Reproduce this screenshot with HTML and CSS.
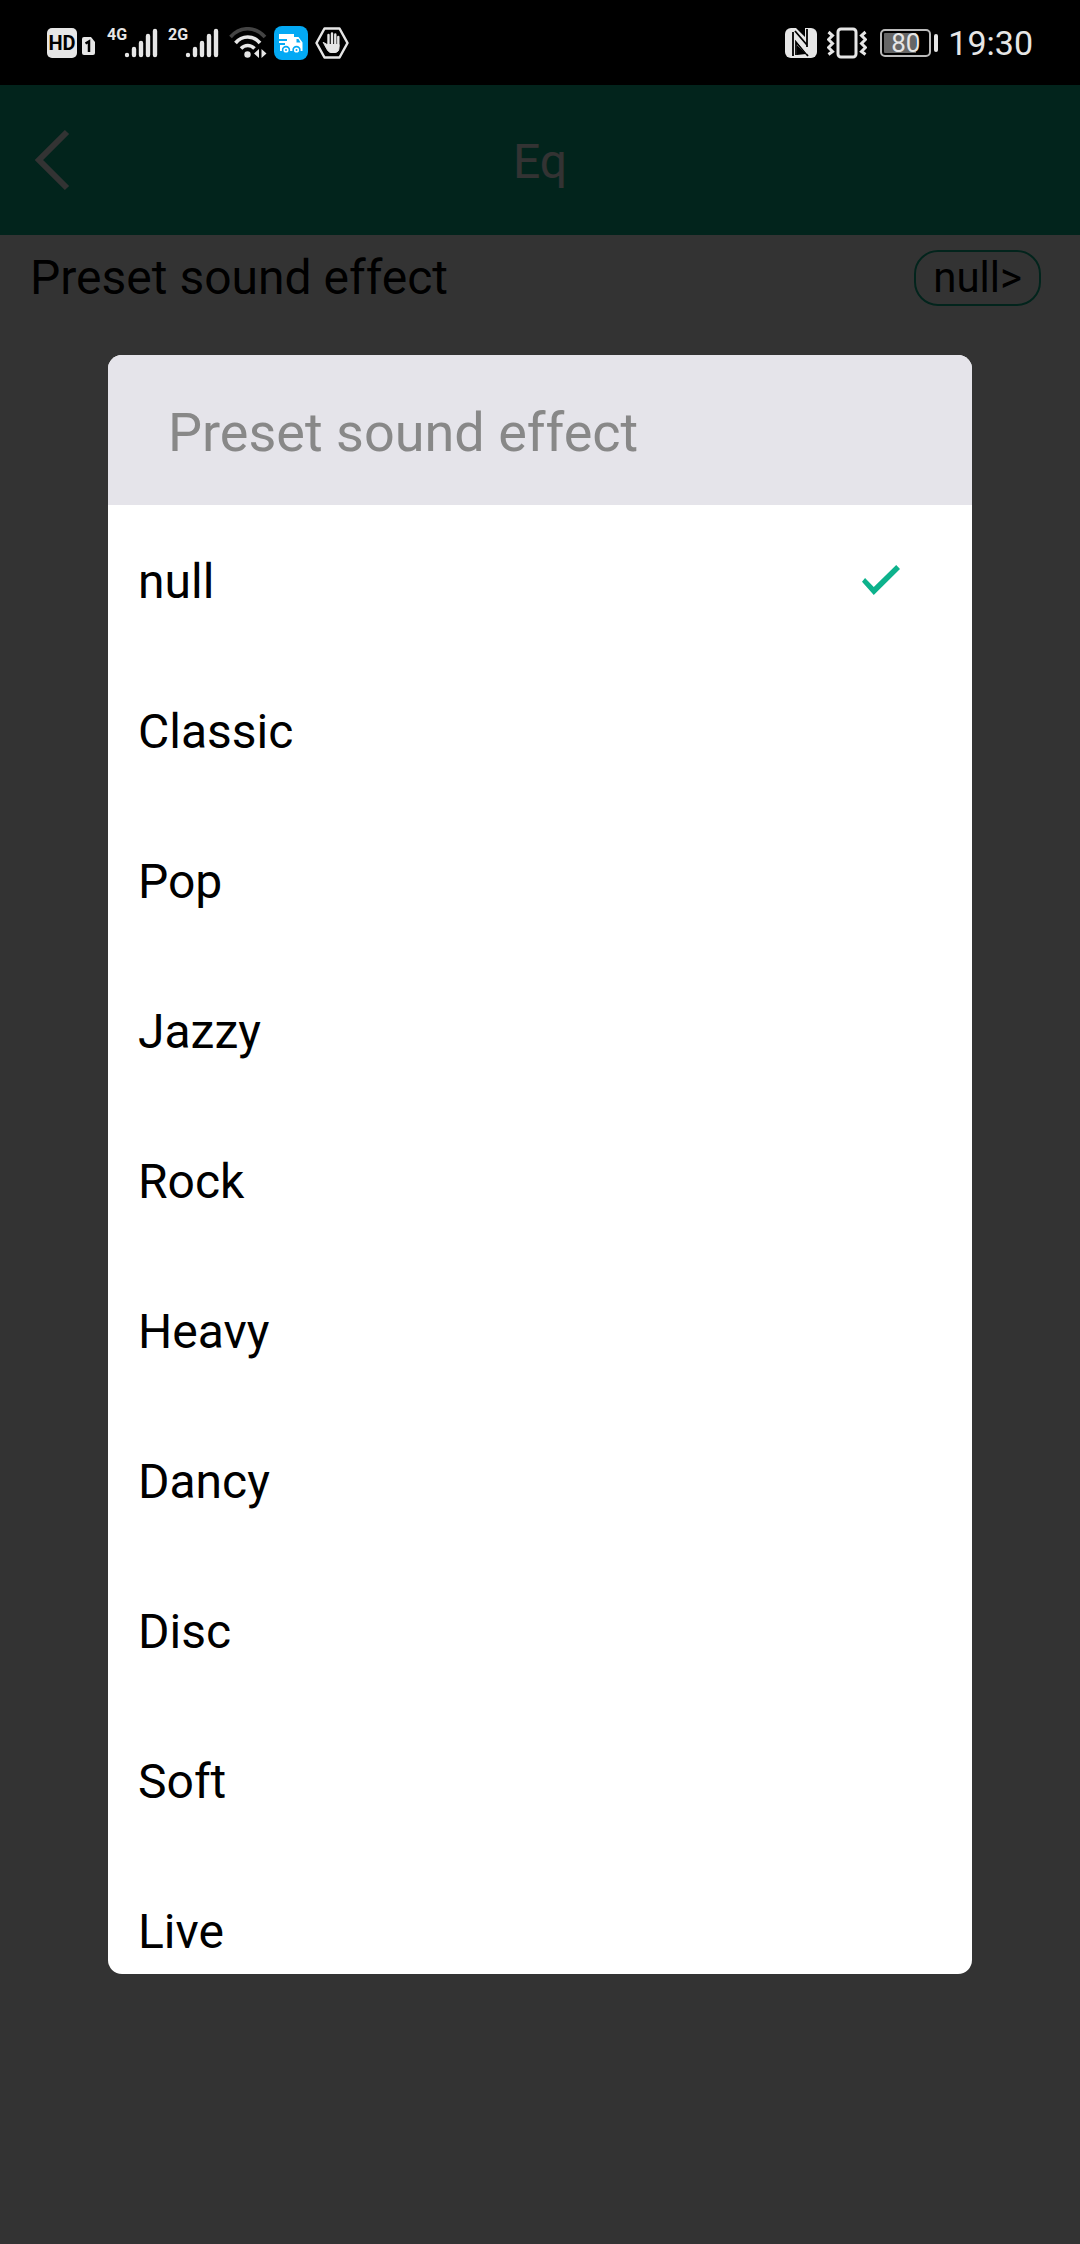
FILE: index.html
```html
<!DOCTYPE html>
<html lang="en">
<head>
  <meta charset="UTF-8">
  <meta name="viewport" content="width=device-width, initial-scale=1.0">
  <title>Eq</title>
  <link rel="stylesheet" href="styles.css">
</head>
<body>

<div class="status-bar">
  <div class="status-left">
    <span class="hd">HD</span>
    <svg class="sim" width="13" height="18" viewBox="0 0 13 18" role="img" aria-label="SIM 1">
      <path d="M2 0h7l4 5v11a2 2 0 0 1-2 2H2a2 2 0 0 1-2-2V2a2 2 0 0 1 2-2z" fill="#e6e6e6"/>
      <path d="M3.5 6.5L7 4.500V15" fill="none" stroke="#000" stroke-width="2.5"/>
    </svg>
    <span class="signal">
      <span class="net">4G</span>
      <svg width="34" height="32" viewBox="0 0 34 32" stroke="#e6e6e6" stroke-width="4.4" stroke-linecap="round">
        <path d="M3 28v0M10 22v6M17 16v12M24 9v19M31 4v24"/>
      </svg>
    </span>
    <span class="signal">
      <span class="net">2G</span>
      <svg width="34" height="32" viewBox="0 0 34 32" stroke="#e6e6e6" stroke-width="4.4" stroke-linecap="round">
        <path d="M3 28v0M10 22v6M17 16v12M24 9v19M31 4v24"/>
      </svg>
    </span>
    <svg class="wifi" width="38" height="32" viewBox="0 0 38 32" fill="none" stroke="#e6e6e6" stroke-width="3.6">
      <path d="M1.500 10C11-1 26-1 36 10" stroke="#444"/>
      <path d="M6.500 16C13 8 24.500 8 31 16"/>
      <path d="M12 21.500c4-4 9.500-4 13.500 0"/>
      <circle cx="18.500" cy="27.500" r="3.200" fill="#e6e6e6" stroke="none"/>
      <path d="M30 22v9l-5-4.500zM32.500 22v9l5-4.500z" fill="#e6e6e6" stroke="none"/>
    </svg>
    <svg class="truck" width="34" height="34" viewBox="0 0 34 34">
      <rect width="34" height="34" rx="8" fill="#03a9f4"/>
      <path d="M5 8h15v3h4.500l4 5.500V25H6v-6h5v-2H5v-2h8v-2H5z" fill="#fff"/>
      <path d="M22.500 13h2l2 3.500h-4z" fill="#03a9f4"/>
      <g fill="#fff" stroke="#03a9f4" stroke-width="1.600">
        <circle cx="12" cy="24" r="3.400"/>
        <circle cx="22.500" cy="24" r="3.400"/>
      </g>
      <circle cx="12" cy="24" r="1" fill="#03a9f4"/>
      <circle cx="22.500" cy="24" r="1" fill="#03a9f4"/>
    </svg>
    <svg class="hand" width="34" height="34" viewBox="0 0 34 34" fill="none" stroke="#e6e6e6" stroke-linejoin="round" stroke-linecap="round">
      <path d="M9.500 2.500h15L32.500 17l-8 14.500h-15L1.500 17z" stroke-width="2.500"/>
      <path d="M13.500 9v9M17 7.500v10M20.300 8.500v10M23.300 11v9" stroke-width="2.400"/>
      <path d="M8.500 16.500l3.500 2h12v3.500c0 3-2 4.500-4 4.500h-4c-2 0-3.500-2-4.500-4z" fill="#e6e6e6" stroke-width="1"/>
    </svg>
  </div>
  <div class="status-right">
    <svg class="nfc" width="32" height="32" viewBox="0 0 32 32">
      <rect y="1" width="32" height="30" rx="6" fill="#e6e6e6"/>
      <path d="M11 1l9 9V1zM12 18v10l9-1z" fill="#000"/>
      <path d="M8 29V5M22 20V2M10 4l12 14M11 28V15l12 14" fill="none" stroke="#000" stroke-width="1.800"/>
      <path d="M9 6l13 15v6L9 11z" fill="#e6e6e6"/>
    </svg>
    <svg class="vibrate" width="40" height="32" viewBox="0 0 40 32" fill="none" stroke="#e6e6e6" stroke-width="3">
      <rect x="11" y="2" width="18" height="28" rx="3"/>
      <path d="M1.500 5l4 3.500-4 4 4 4-4 4 4 4-4 3M38.500 5l-4 3.500 4 4-4 4 4 4-4 4 4 3"/>
    </svg>
    <span class="battery"><span class="battery-body">80</span></span>
    <span class="time">19:30</span>
  </div>
</div>

<div class="app">
  <header class="title-bar">
    <button class="back" aria-label="Back">
      <svg width="36" height="62" viewBox="0 0 36 62" fill="none" stroke="#fff" stroke-width="6">
        <path d="M33 3L5 31l28 28"/>
      </svg>
    </button>
    <h1>Eq</h1>
  </header>

  <main class="setting">
    <span>Preset sound effect</span>
    <button class="value">null&gt;</button>
  </main>

  <div class="overlay">
    <div class="dialog" role="dialog" aria-labelledby="dialogTitle">
      <h2 id="dialogTitle">Preset sound effect</h2>
      <div class="options">
        <label class="option">null <input type="radio" name="preset" checked></label>
        <label class="option">Classic <input type="radio" name="preset"></label>
        <label class="option">Pop <input type="radio" name="preset"></label>
        <label class="option">Jazzy <input type="radio" name="preset"></label>
        <label class="option">Rock <input type="radio" name="preset"></label>
        <label class="option">Heavy <input type="radio" name="preset"></label>
        <label class="option">Dancy <input type="radio" name="preset"></label>
        <label class="option">Disc <input type="radio" name="preset"></label>
        <label class="option">Soft <input type="radio" name="preset"></label>
        <label class="option">Live <input type="radio" name="preset"></label>
      </div>
    </div>
  </div>
</div>

</body>
</html>
```
FILE: styles.css
```css
* {
  box-sizing: border-box;
}
body {
  font-family: Roboto, sans-serif;
  font-size: 48px;
  margin: 0;
  height: 100vh;
  display: flex;
  flex-direction: column;
  background-color: #fff;
  color: #000;
}
button {
  font-family: inherit;
  background: none;
  border: none;
  padding: 0;
  cursor: pointer;
}
svg {
  display: block;
  flex: none;
}

/* status bar */
.status-bar {
  height: 85px;
  flex: none;
  padding: 0 47px;
  display: flex;
  align-items: center;
  justify-content: space-between;
  background-color: #000;
  color: #e6e6e6;
}
.status-left, .status-right {
  display: flex;
  align-items: center;
}
.status-left {
  gap: 7px;
}
.hd {
  width: 30px;
  height: 30px;
  border-radius: 5px;
  background-color: #e6e6e6;
  color: #000;
  font-size: 20px;
  font-weight: 700;
  line-height: 30px;
  text-align: center;
}
.sim {
  margin: 6px 5px 0 -2px;
}
.signal {
  display: flex;
  align-items: flex-start;
  margin-right: 3px;
}
.net {
  width: 17px;
  font-size: 16px;
  font-weight: 700;
  line-height: 16px;
}
.status-right {
  gap: 10px;
}
.vibrate {
  margin-right: 3px;
}
.battery {
  display: flex;
  align-items: center;
  gap: 3px;
}
.battery::after {
  content: "";
  width: 4px;
  height: 18px;
  border-radius: 2px;
  background-color: #e6e6e6;
}
.battery-body {
  width: 51px;
  height: 28px;
  border: 2px solid #bbb;
  border-radius: 5px;
  padding: 2px;
  background: linear-gradient(90deg, #666 75%, #000 75%) content-box;
  font-size: 26px;
  line-height: 20px;
  text-align: center;
}
.time {
  font-size: 34px;
}

/* page under the dialog */
.app {
  position: relative;
  flex: 1;
}
.title-bar {
  height: 150px;
  padding: 0 34px;
  display: grid;
  grid-template-columns: 1fr auto 1fr;
  align-items: center;
  background-color: #0db28c;
  color: #fff;
}
.title-bar h1 {
  margin: 0;
  padding-top: 3px;
  font-size: 48px;
  font-weight: 400;
}
.back {
  justify-self: start;
}
.setting {
  padding: 14px 39px 14px 30px;
  display: flex;
  align-items: center;
  justify-content: space-between;
}
.value {
  height: 56px;
  padding: 0 17px;
  border: 2px solid #0db28c;
  border-radius: 24px;
  color: #000;
  font-size: 42px;
  line-height: 50px;
}

/* dialog */
.overlay {
  position: absolute;
  inset: 0;
  display: flex;
  align-items: center;
  justify-content: center;
  background-color: rgba(0, 0, 0, 0.8);
}
.dialog {
  width: 80%;
  height: 75%;
  display: flex;
  flex-direction: column;
  overflow: hidden;
  border-radius: 14px;
  background-color: #fff;
}
.dialog h2 {
  flex: none;
  height: 150px;
  margin: 0;
  padding: 3px 60px 0;
  background-color: #e5e4ea;
  color: #888;
  font-size: 54px;
  font-weight: 400;
  line-height: 150px;
}
.options {
  flex: 1;
  overflow-y: auto;
  scrollbar-width: none;
}
.option {
  height: 150px;
  padding: 3px 72px 0 30px;
  display: flex;
  align-items: center;
  justify-content: space-between;
}
.option input {
  appearance: none;
  width: 38px;
  height: 30px;
  margin: 0 0 3px;
  clip-path: polygon(0 56%, 8% 44%, 31% 74%, 90% 0, 100% 14%, 31% 100%);
}
.option input:checked {
  background-color: #0db28c;
}
```
